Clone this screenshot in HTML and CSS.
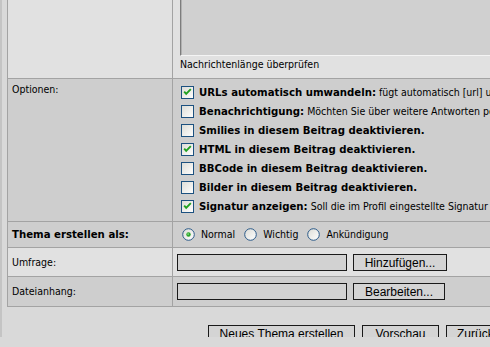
FILE: index.html
```html
<!DOCTYPE html>
<html lang="de">

<head>
  <title>Neues Thema erstellen</title>
  <link rel="stylesheet" href="styles.css">
</head>

<body>
  <svg class="defs" width="0" height="0">
    <defs>
      <linearGradient id="boxbg" x1="0" y1="0" x2="1" y2="1">
        <stop offset="0" stop-color="#dcdcd6" />
        <stop offset="1" stop-color="#ffffff" />
      </linearGradient>
      <symbol id="cb" viewBox="0 0 13 13">
        <rect x=".5" y=".5" width="12" height="12" fill="url(#boxbg)" stroke="#1c5180" />
      </symbol>
      <symbol id="cb-on" viewBox="0 0 13 13">
        <rect x=".5" y=".5" width="12" height="12" fill="url(#boxbg)" stroke="#1c5180" />
        <path d="M3.2 5.6l2 2.2 4.6-4.6" fill="none" stroke="#21a121" stroke-width="1.9" />
      </symbol>
      <symbol id="rb" viewBox="0 0 13 13">
        <circle cx="6.5" cy="6.5" r="5.8" fill="url(#boxbg)" stroke="#2b5a89" />
      </symbol>
      <symbol id="rb-on" viewBox="0 0 13 13">
        <circle cx="6.5" cy="6.5" r="5.8" fill="url(#boxbg)" stroke="#2b5a89" />
        <circle cx="6.5" cy="6.5" r="2.2" fill="#2ca52c" />
        <circle cx="6.1" cy="6.1" r=".8" fill="#9be89b" />
      </symbol>
    </defs>
  </svg>

  <div class="page">
    <table class="form">
      <colgroup>
        <col class="col-label">
        <col>
      </colgroup>
      <tr class="row-light">
        <td class="label"></td>
        <td class="message">
          <div class="textarea"></div>
          <div class="hint">Nachrichtenlänge überprüfen</div>
        </td>
      </tr>
      <tr class="row-dark">
        <td class="label pad-top">Optionen:</td>
        <td class="options">
          <div class="opt"><svg class="box"><use href="#cb-on" /></svg><span><b>URLs automatisch umwandeln:</b> fügt automatisch [url] und [/url] um Internet-Adressen herum.</span></div>
          <div class="opt"><svg class="box"><use href="#cb" /></svg><span><b>Benachrichtigung:</b> Möchten Sie über weitere Antworten per E-Mail benachrichtigt werden?</span></div>
          <div class="opt"><svg class="box"><use href="#cb" /></svg><span><b>Smilies in diesem Beitrag deaktivieren.</b></span></div>
          <div class="opt"><svg class="box"><use href="#cb-on" /></svg><span><b>HTML in diesem Beitrag deaktivieren.</b></span></div>
          <div class="opt"><svg class="box"><use href="#cb" /></svg><span><b>BBCode in diesem Beitrag deaktivieren.</b></span></div>
          <div class="opt"><svg class="box"><use href="#cb" /></svg><span><b>Bilder in diesem Beitrag deaktivieren.</b></span></div>
          <div class="opt"><svg class="box"><use href="#cb-on" /></svg><span><b>Signatur anzeigen:</b> Soll die im Profil eingestellte Signatur angehängt werden?</span></div>
        </td>
      </tr>
      <tr class="row-dark type-row">
        <td class="label middle"><b>Thema erstellen als:</b></td>
        <td class="types">
          <div class="radios">
            <span class="radio"><svg class="box"><use href="#rb-on" /></svg>Normal</span>
            <span class="radio"><svg class="box"><use href="#rb" /></svg>Wichtig</span>
            <span class="radio"><svg class="box"><use href="#rb" /></svg>Ankündigung</span>
          </div>
        </td>
      </tr>
      <tr class="row-light">
        <td class="label middle">Umfrage:</td>
        <td class="field">
          <div class="input-line"><span class="input"></span><button class="btn add">Hinzufügen...</button></div>
        </td>
      </tr>
      <tr class="row-dark">
        <td class="label middle">Dateianhang:</td>
        <td class="field last">
          <div class="input-line"><span class="input"></span><button class="btn edit">Bearbeiten...</button></div>
        </td>
      </tr>
    </table>

    <div class="actions">
      <button class="btn create">Neues Thema erstellen</button>
      <button class="btn preview">Vorschau</button>
      <button class="btn reset">Zurücksetzen</button>
    </div>
  </div>
</body>

</html>
```

FILE: styles.css
```css
body {
  margin: 0;
  background-color: #d9d9d9;
  color: #000;
  font-family: "DejaVu Sans Condensed", "DejaVu Sans", sans-serif;
  font-size: 10.5px;
  overflow: hidden;
}

b {
  font-size: 11.3px;
}

.defs {
  position: absolute;
}

.page {
  border-left: 2px solid #c4c4c4;
  padding-left: 5px;
  height: 347px;
  box-sizing: border-box;
}

.form {
  border-collapse: collapse;
  table-layout: fixed;
  width: 640px;
  margin-top: -10px;
}

.col-label {
  width: 165px;
}

.form td {
  border: 1px solid #a3a3a3;
  padding: 0;
  vertical-align: top;
  line-height: 13px;
}

.row-light td {
  background: #e1e1e1;
}

.row-dark td {
  background: #cecece;
}

.form td.label {
  padding-left: 4px;
}

.form td.pad-top {
  padding-top: 4px;
}

.form td.middle {
  vertical-align: middle;
}

.form td.message {
  padding: 4px 0 7px 7px;
}

.textarea {
  height: 60px;
  background: #d0d0d0;
  border-left: 1px solid #7c7c7c;
  border-bottom: 1px solid #f4f4f4;
  box-shadow: inset 1px 0 #b0b0b0;
}

.hint {
  margin-top: 2px;
}

.form td.options {
  padding: 4px 0 5px 8px;
}

.opt {
  display: flex;
  align-items: center;
  height: 19px;
  white-space: nowrap;
}

.box {
  width: 13px;
  height: 13px;
  flex: none;
  margin-right: 5px;
}

.type-row td {
  height: 25px;
}

.form td.types {
  padding-left: 9px;
  vertical-align: middle;
}

.radios {
  display: flex;
  gap: 9px;
}

.radio {
  display: flex;
  align-items: center;
}

.radio .box {
  margin-right: 6px;
}

.form td.field {
  padding: 6px 0 5px 4px;
}

.form td.field.last {
  padding-bottom: 6px;
}

.input-line {
  display: flex;
  gap: 6px;
  height: 17px;
}

.input {
  width: 168px;
  height: 15px;
  border: 1px solid #1a1a1a;
  background: #d2d2d2;
}

.btn {
  flex: none;
  font-family: "Liberation Sans", Arial, sans-serif;
  font-size: 12px;
  color: #000;
  height: 18px;
  padding: 0;
  border: 1px solid #1a1a1a;
  background: #d4d4d4;
  line-height: 16px;
  white-space: nowrap;
}

.input-line .btn {
  height: 17px;
}

.add {
  width: 94px;
}

.edit {
  width: 92px;
}

.actions {
  display: flex;
  gap: 7px;
  padding: 18px 0 0 201px;
}

.create {
  width: 147px;
}

.preview {
  width: 77px;
}

.reset {
  padding: 0 12px 0 10px;
}
```
